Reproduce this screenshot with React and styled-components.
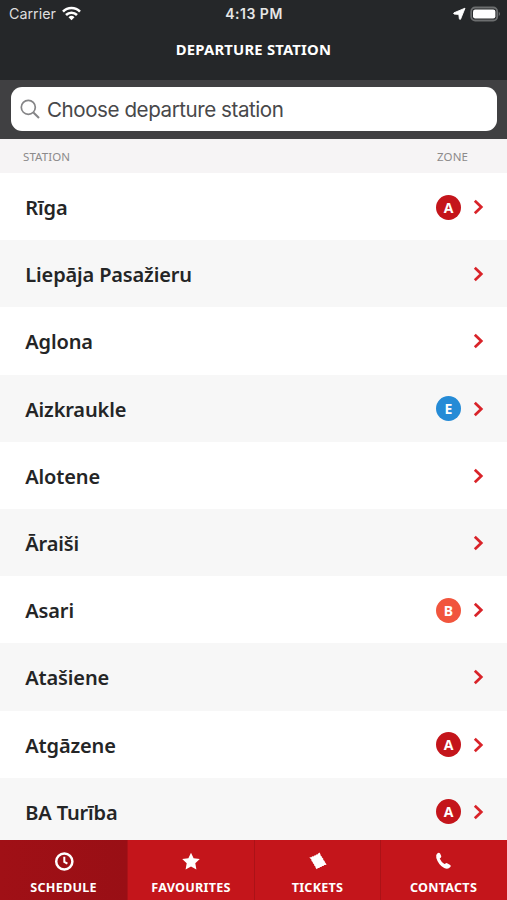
import React from "react";
import styled, { createGlobalStyle } from "styled-components";

const GlobalStyle = createGlobalStyle`
  body {
    margin: 0;
    background: #fff;
    overflow: hidden;
  }
  * {
    box-sizing: border-box;
  }
`;

const Screen = styled.div`
  width: 507px;
  height: 900px;
  display: flex;
  flex-direction: column;
  overflow: hidden;
  font-family: "Noto Sans", sans-serif;
  white-space: nowrap;
`;

const Header = styled.header`
  height: 79.5px;
  flex: none;
  background: #252729;
  color: #fff;
`;

const StatusBar = styled.div`
  height: 27px;
  padding: 0 6px 0 9px;
  display: grid;
  grid-template-columns: 1fr auto 1fr;
  align-items: center;
  font-family: Inter, sans-serif;
  font-size: 14.3px;
`;

const Carrier = styled.div`
  display: flex;
  align-items: center;
  gap: 6px;
  color: #dedede;
`;

const Clock = styled.div`
  margin-right: 2px;
  font-size: 14px;
  font-weight: 600;
  letter-spacing: 0.5px;
  color: #e6e6e6;
`;

const StatusIcons = styled.div`
  display: flex;
  align-items: center;
  justify-content: flex-end;
  gap: 4px;
`;

const Title = styled.h1`
  margin: 0;
  padding-top: 11px;
  line-height: 22px;
  text-align: center;
  font-size: 14.8px;
  font-weight: 700;
  letter-spacing: 0.2px;
`;

const SearchBar = styled.div`
  height: 59.5px;
  flex: none;
  padding: 7px 10px 8.5px 11px;
  background: #404042;
`;

const SearchField = styled.div`
  height: 44px;
  display: flex;
  align-items: center;
  gap: 7px;
  padding-left: 9px;
  padding-top: 1px;
  border-radius: 11px;
  background: #fff;
  color: #48484a;
  font-family: Inter, sans-serif;
  font-size: 20.6px;
  letter-spacing: -0.45px;
`;

const ListHeader = styled.div`
  height: 34px;
  flex: none;
  display: flex;
  justify-content: space-between;
  align-items: center;
  padding: 1px 39px 0 23px;
  background: #f6f4f5;
  color: #8c8a8b;
  font-size: 11.5px;
  letter-spacing: 0.1px;
`;

const List = styled.div`
  flex: none;
  height: 667px;
  overflow: hidden;
`;

const Row = styled.div`
  height: 67.2px;
  display: flex;
  align-items: center;
  padding: 1px 23px 0 25.3px;
  background: ${({ $shaded }) => ($shaded ? "#f7f7f7" : "#fff")};
`;

const Name = styled.div`
  flex: 1;
  padding-top: 1px;
  color: #242526;
  font-size: 20px;
  font-weight: 600;
  letter-spacing: -0.15px;
`;

const Badge = styled.div`
  width: 25px;
  height: 25px;
  margin-right: 12px;
  border-radius: 50%;
  display: flex;
  align-items: center;
  justify-content: center;
  background: ${({ $color }) => $color};
  color: #fff;
  font-size: 14px;
  font-weight: 700;
`;

const TabBar = styled.nav`
  height: 60px;
  flex: none;
  display: grid;
  grid-template-columns: 128px 127px 126px 126px;
`;

const Tab = styled.div`
  display: flex;
  flex-direction: column;
  align-items: center;
  padding-top: 11px;
  background: ${({ $active }) => ($active ? "linear-gradient(90deg, #a01016, #990f15)" : "#c4151b")};
  border-right: 1px solid ${({ $last }) => ($last ? "transparent" : "#ab1217")};
  color: #fff;
  font-size: 12.6px;
  font-weight: 700;
  letter-spacing: 0.25px;
  line-height: 20px;

  svg {
    display: block;
    margin-bottom: 7px;
  }
`;

const ZONE_COLORS = {
  A: "#c4151b",
  B: "#f1553d",
  E: "#258bd6",
};

const STATIONS = [
  { name: "Rīga", zone: "A" },
  { name: "Liepāja Pasažieru" },
  { name: "Aglona" },
  { name: "Aizkraukle", zone: "E" },
  { name: "Alotene" },
  { name: "Āraiši" },
  { name: "Asari", zone: "B" },
  { name: "Atašiene" },
  { name: "Atgāzene", zone: "A" },
  { name: "BA Turība", zone: "A" },
];

const WifiIcon = () => (
  <svg width="19" height="15" viewBox="0 0 19 15" fill="none" stroke="#fff" strokeWidth="2.6">
    <path d="M1 5.6a12 12 0 0 1 17 0" />
    <path d="M4 9a7.8 7.8 0 0 1 11 0" />
    <path d="M9.5 14.2 6.5 11.2a4.3 4.3 0 0 1 6 0z" fill="#fff" stroke="none" />
  </svg>
);

const LocationIcon = () => (
  <svg width="13" height="13" viewBox="0 0 13 13">
    <path d="M12 1.2 1 5.8q-.9.9.2 1.3l4.6.3.6 4.5q.5 1.1 1.2.2z" fill="#fff" stroke="#fff" strokeWidth=".9" />
  </svg>
);

const BatteryIcon = () => (
  <svg width="31" height="16" viewBox="0 0 31 16">
    <rect x="1.2" y="1.5" width="26" height="13" rx="4" fill="none" stroke="#6c6e6f" strokeWidth="1.8" />
    <rect x="3" y="3.5" width="22.4" height="9" rx="2.2" fill="#fff" />
    <path d="M28.8 5.8q2.2 2.2 0 4.4z" fill="#77797a" />
  </svg>
);

const SearchIcon = () => (
  <svg width="20" height="21" viewBox="0 0 20 21" fill="none" stroke="#858587" strokeWidth="1.7">
    <circle cx="8.3" cy="8.3" r="7" />
    <path d="m13.4 13.5 5.6 5.4" strokeWidth="2.1" />
  </svg>
);

const Chevron = () => (
  <svg width="11" height="16" viewBox="0 0 11 16" fill="none" stroke="#d92329" strokeWidth="2.7">
    <path d="m1.8 1.7 6.5 6.3-6.5 6.3" />
  </svg>
);

const ClockIcon = () => (
  <svg width="20" height="20" viewBox="0 0 20 20" fill="none" stroke="#fff">
    <circle cx="10.3" cy="10.5" r="8.1" strokeWidth="2.5" />
    <path d="M10.3 5.7v5.2l3.1 1.8" strokeWidth="2" />
  </svg>
);

const StarIcon = () => (
  <svg width="20" height="20" viewBox="0 0 20 20">
    <path d="m10 1.7 2.6 5.6 6.2.8-4.5 4.2 1.1 6.1-5.4-3-5.4 3 1.1-6.1L1.2 8.1l6.2-.8z" fill="#fff" />
  </svg>
);

const TicketIcon = () => (
  <svg width="20" height="20" viewBox="0 0 20 20">
    <path
      d="m1.3 6.6 1.2-.4.9.1.8-1 1.2.1.8-1 1.2.1.8-1.1 1.2.1.8-1.1 1.4-.8.9 1.8.1 1 1.2 1 .2 1.2 1.2 1 .1 1.3 1.3 1 .2 1.2 1.8 2.4-1.2.5-1.1 0-.8 1-1.3 0-.8 1-1.3 0-.8 1-1.2.1-1.5 1.1-1.1-1.6-.1-1.2-1.2-1-.1-1.2-1.2-1-.2-1.3-1.2-1-.1-1.3z"
      fill="#fff"
    />
  </svg>
);

const PhoneIcon = () => (
  <svg width="20" height="20" viewBox="0 0 20 20">
    <path
      d="M3.5 2.2q1.6-1.1 2.6.4l1.1 2.5q.4 1.2-.7 1.8l-.8.6q1.5 3.5 4.7 5.6l1.2-.7q.9-.7 2 .1l2.6 1.4q1.2.9.1 2.2-2.3 2.7-6.1.9Q4.5 14 2.3 6.9 1.6 3.6 3.5 2.2z"
      fill="#fff"
    />
  </svg>
);

const StationRow = ({ name, zone, shaded }) => (
  <Row $shaded={shaded}>
    <Name>{name}</Name>
    {zone && <Badge $color={ZONE_COLORS[zone]}>{zone}</Badge>}
    <Chevron />
  </Row>
);

const App = () => {
  return (
    <Screen>
      <GlobalStyle />
      <Header>
        <StatusBar>
          <Carrier>
            Carrier
            <WifiIcon />
          </Carrier>
          <Clock>4:13 PM</Clock>
          <StatusIcons>
            <LocationIcon />
            <BatteryIcon />
          </StatusIcons>
        </StatusBar>
        <Title>DEPARTURE STATION</Title>
      </Header>
      <SearchBar>
        <SearchField>
          <SearchIcon />
          Choose departure station
        </SearchField>
      </SearchBar>
      <ListHeader>
        <span>STATION</span>
        <span>ZONE</span>
      </ListHeader>
      <List>
        {STATIONS.map((station, i) => (
          <StationRow key={station.name} {...station} shaded={i % 2 === 1} />
        ))}
      </List>
      <TabBar>
        <Tab $active>
          <ClockIcon />
          SCHEDULE
        </Tab>
        <Tab>
          <StarIcon />
          FAVOURITES
        </Tab>
        <Tab>
          <TicketIcon />
          TICKETS
        </Tab>
        <Tab $last>
          <PhoneIcon />
          CONTACTS
        </Tab>
      </TabBar>
    </Screen>
  );
};

export default App;
